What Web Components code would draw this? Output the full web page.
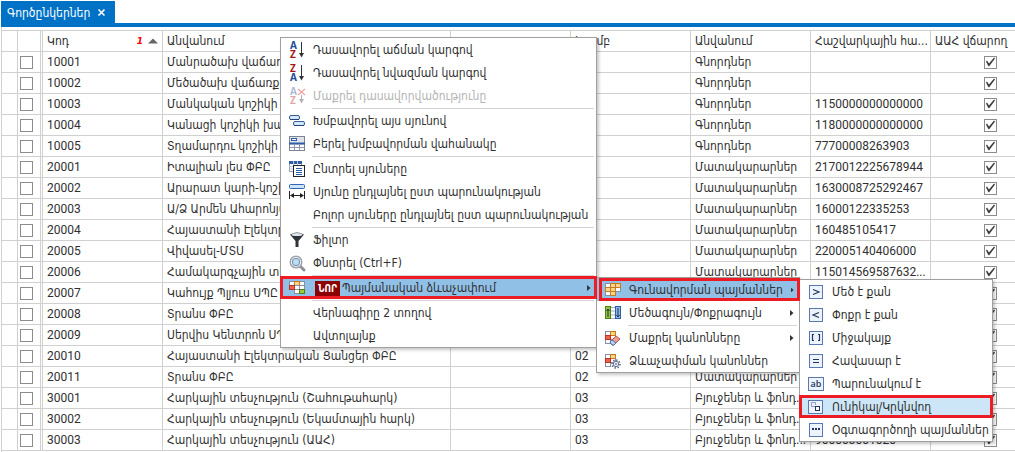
<!DOCTYPE html>
<html lang="hy">
<head>
<meta charset="utf-8">
<title>Գործընկերներ</title>
<style>
  html, body { margin: 0; min-height: 100vh; }
  body {
    background: #fff; color: #303030; overflow: hidden;
    font: 12px/16px "DejaVu Sans Condensed", "DejaVu Sans", sans-serif;
  }
</style>
</head>
<body>
<app-window>
  <tab-strip slot="tabs">Գործընկերներ</tab-strip>
  <data-grid></data-grid>
  <context-menu slot="menu" class="root" style="--menu-width:317px">
    <menu-item icon="az">Դասավորել աճման կարգով</menu-item>
    <menu-item icon="za">Դասավորել նվազման կարգով</menu-item>
    <menu-item icon="unsort" disabled>Մաքրել դասավորվածությունը</menu-item>
    <menu-separator></menu-separator>
    <menu-item icon="group">Խմբավորել այս սյունով</menu-item>
    <menu-item icon="panel">Բերել խմբավորման վահանակը</menu-item>
    <menu-separator></menu-separator>
    <menu-item icon="columns">Ընտրել սյուները</menu-item>
    <menu-item icon="width">Սյունը ընդլայնել ըստ պարունակության</menu-item>
    <menu-item>Բոլոր սյուները ընդլայնել ըստ պարունակության</menu-item>
    <menu-separator></menu-separator>
    <menu-item icon="filter">Ֆիլտր</menu-item>
    <menu-item icon="search">Փնտրել (Ctrl+F)</menu-item>
    <menu-separator></menu-separator>
    <menu-item icon="format" open marked><new-badge>ՆՈՐ</new-badge>Պայմանական ձևաչափում
      <context-menu slot="submenu" style="--menu-width:204px">
        <menu-item icon="color" open marked style="--mark-inset:0 -1px 0 2px">Գունավորման պայմաններ
          <context-menu slot="submenu" style="--menu-width:194px">
            <menu-item icon="gt">Մեծ է քան</menu-item>
            <menu-item icon="lt">Փոքր է քան</menu-item>
            <menu-item icon="between">Միջակայք</menu-item>
            <menu-item icon="eq">Հավասար է</menu-item>
            <menu-item icon="contains">Պարունակում է</menu-item>
            <menu-item icon="unique" active marked>Ունիկալ/Կրկնվող</menu-item>
            <menu-item icon="custom">Օգտագործողի պայմաններ</menu-item>
          </context-menu>
        </menu-item>
        <menu-item icon="minmax" expands>Մեծագույն/Փոքրագույն</menu-item>
        <menu-separator></menu-separator>
        <menu-item icon="erase" expands>Մաքրել կանոնները</menu-item>
        <menu-item icon="rules">Ձևաչափման կանոններ</menu-item>
      </context-menu>
    </menu-item>
    <menu-separator></menu-separator>
    <menu-item>Վերնագիրը 2 տողով</menu-item>
    <menu-item>Ավտոլայնք</menu-item>
  </context-menu>
</app-window>

<script>
const mount = (el, html) => { el.attachShadow({ mode: 'open' }).innerHTML = html; };

/* Window frame: tabs on top, document below, menus floating over it */
customElements.define('app-window', class extends HTMLElement {
  connectedCallback() {
    mount(this, `<style>
      :host { display: flex; flex-direction: column; position: relative; min-height: 100vh; }
      main { flex: 1; min-width: 0; margin-left: 1px; padding-top: 3px; border-left: 1px solid #d0d0d0; overflow: hidden; }
      ::slotted([slot=menu]) { position: absolute; left: 280px; top: 37px; z-index: 1; }
    </style><slot name="tabs"></slot><main><slot></slot></main><slot name="menu"></slot>`);
  }
});

customElements.define('tab-strip', class extends HTMLElement {
  connectedCallback() {
    mount(this, `<style>
      :host { display: flex; margin: 1px 0 0 1px; border-bottom: 4px solid #0072c6; }
      .tab { display: flex; align-items: center; gap: 7px; height: 22px; padding: 2px 8px 0 6px; box-sizing: border-box; background: #0072c6; color: #fff; }
      button { all: unset; display: block; width: 10px; height: 10px; }
      svg { display: block; }
    </style><div class="tab"><span><slot></slot></span><button aria-label="Փակել"><svg width="10" height="10" viewBox="0 0 10 10"><path d="M1.500 1.500l6 6M7.500 1.500l-6 6" stroke="#fff" stroke-width="1.600"/></svg></button></div>`);
  }
});

const PARTNERS = [
  ['10001', 'Մանրածախ վաճառքի', '01', 'Գնորդներ', ''],
  ['10002', 'Մեծածախ վաճառքի', '01', 'Գնորդներ', ''],
  ['10003', 'Մանկական կոշիկի', '01', 'Գնորդներ', '1150000000000000'],
  ['10004', 'Կանացի կոշիկի խանութ', '01', 'Գնորդներ', '1180000000000000'],
  ['10005', 'Տղամարդու կոշիկի', '01', 'Գնորդներ', '77700008263903'],
  ['20001', 'Իտալիան լես ՓԲԸ', '02', 'Մատակարարներ', '2170012225678944'],
  ['20002', 'Արարատ կարի-կոշիկ', '02', 'Մատակարարներ', '1630008725292467'],
  ['20003', 'Ա/Ձ Արմեն Ահարոնյան', '02', 'Մատակարարներ', '16000122335253'],
  ['20004', 'Հայաստանի Էլեկտրական', '02', 'Մատակարարներ', '160485105417'],
  ['20005', 'Վիվասել-ՄՏՍ', '02', 'Մատակարարներ', '220005140406000'],
  ['20006', 'Համակարգչային տեխնիկա', '02', 'Մատակարարներ', '115014569587632...'],
  ['20007', 'Կահույք Պլյուս ՍՊԸ', '02', 'Մատակարարներ', ''],
  ['20008', 'Տրանս ՓԲԸ', '02', 'Մատակարարներ', ''],
  ['20009', 'Սերվիս Կենտրոն ՍՊԸ', '02', 'Մատակարարներ', ''],
  ['20010', 'Հայաստանի Էլեկտրական Ցանցեր ՓԲԸ', '02', 'Մատակարարներ', ''],
  ['20011', 'Տրանս ՓԲԸ', '02', 'Մատակարարներ', ''],
  ['30001', 'Հարկային տեսչություն (Շահութահարկ)', '03', 'Բյուջեներ և ֆոնդ...', ''],
  ['30002', 'Հարկային տեսչություն (Եկամտային հարկ)', '03', 'Բյուջեներ և ֆոնդ...', ''],
  ['30003', 'Հարկային տեսչություն (ԱԱՀ)', '03', 'Բյուջեներ և ֆոնդ...', '900003001020'],
];

customElements.define('data-grid', class extends HTMLElement {
  connectedCallback() {
    const rows = PARTNERS.map(([code, name, group, kind, account]) => `<tr>
      <td></td><td class="pick"><input type="checkbox" aria-label="Ընտրել ${code}"></td>
      <td class="num">${code}</td><td>${name}</td><td></td><td class="num">${group}</td>
      <td>${kind}</td><td class="num">${account}</td>
      <td><input type="checkbox" checked aria-label="ԱԱՀ վճարող ${code}"></td></tr>`).join('');
    mount(this, `<style>
      :host { display: block; }
      table { width: 100%; min-width: 1049px; table-layout: fixed; border-spacing: 0; border-top: 1px solid #d0d0d0; }
      .mark { width: 16px; } .sel { width: 25px; } .std { width: 120px; } .name { width: 288px; }
      th, td { box-sizing: border-box; height: 21px; padding: 0 4px; border: solid #d0d0d0; border-width: 0 1px 1px 0;
        font-weight: 400; text-align: left; white-space: nowrap; overflow: hidden; }
      th:nth-child(2), td:nth-child(2) { border-right: 3px double #d0d0d0; padding: 0 2px; }
      .num { font-family: Roboto, sans-serif; }
      .sorted { display: flex; align-items: center; gap: 5px; }
      .sorted b { margin-left: auto; color: #f00; font: italic bold 9px/16px "DejaVu Sans", sans-serif; }
      svg { display: block; }
      input { appearance: none; display: block; box-sizing: border-box; width: 13px; height: 13px; margin: 0 auto; border: 1px solid #8c8c8c; background: #fff; }
      .pick input { margin: 0; }
      input:checked::before { content: ""; display: block; width: 11px; height: 11px; background: #3c3c3c;
        clip-path: polygon(1px 5px, 2px 4px, 4px 7px, 9px 1px, 10px 2px, 4px 10px, 3px 9px); }
    </style>
    <table>
      <colgroup><col class="mark"><col class="sel"><col class="std"><col class="name"><col class="std"><col class="std"><col class="std"><col class="std"><col class="std"></colgroup>
      <thead><tr><th></th><th></th>
        <th><span class="sorted">Կոդ<b>1</b><svg width="10" height="6" viewBox="0 0 10 6"><path d="M0 5.500L5 0.500l5 5z" fill="#666"/></svg></span></th>
        <th>Անվանում</th><th></th><th>Խումբ</th><th>Անվանում</th><th>Հաշվարկային հա...</th><th>ԱԱՀ վճարող</th></tr></thead>
      <tbody>${rows}</tbody>
    </table>`);
  }
});

const BLUE = '#1b4d96', RED = '#a8161c';
const letters = (top, bottom) => `<g font-family="Open Sans, sans-serif" font-weight="700" font-size="10">
  <text x="1" y="7" fill="${top === 'A' ? BLUE : RED}">${top}</text>
  <text x="1" y="16" fill="${bottom === 'A' ? BLUE : RED}">${bottom}</text></g>`;
const down = (from) => `<path d="M12.500 ${from}v12" stroke="#333" fill="none"/><path d="M10 11h5l-2.500 4.500z" fill="#333"/>`;
const cell = (x, y, fill, stroke) => `<rect x="${x + .5}" y="${y + .5}" width="5" height="4" fill="${fill}" stroke="${stroke}"/>`;
const W = ['#fff', '#8890a8'], O = ['#fbd58a', '#c77a1e'], R = ['#f0604c', '#b93426'], G = ['#9ccb3b', '#557f1a'];
const cells = (list) => list.map(([c, r, k]) => cell(c * 5, 1 + r * 4, k[0], k[1])).join('');
const op = (body) => `<rect x="1.500" y="1.500" width="13" height="13" fill="#edf3fc" stroke="#5877b5"/><g stroke="#22345f" fill="none" stroke-width="1.200">${body}</g>`;
const ICONS = {
  az: letters('A', 'Z') + down(0),
  za: letters('Z', 'A') + down(0),
  unsort: `<g opacity=".38">${letters('A', 'Z')}<path d="M12.500 7v6" stroke="#333"/><path d="M10 11h5l-2.500 4.500z" fill="#333"/><path d="M9 1l7 6M16 1l-7 6" stroke="#d11" stroke-width="1.400"/></g>`,
  group: `<rect x=".5" y="2.500" width="10" height="4" rx="1.500" fill="#d3e8fa" stroke="#3a5d96"/><rect x="4.500" y="8.500" width="11" height="4" rx="1.500" fill="#d3e8fa" stroke="#3a5d96"/><path d="M1 6.500h9M5 12.500h10" stroke="#24457c"/>`,
  panel: `<rect x=".5" y=".5" width="15" height="14" fill="#dfe2e8" stroke="#7d8494"/><rect x="2.500" y="2.500" width="5" height="2" fill="#fff" stroke="#2c5fa8"/><path d="M0 7.500h16" stroke="#2c5fa8" stroke-width="2"/><path d="M1 9h14v5H1z" fill="#fff"/><path d="M1 11.500h14M5.500 8v6M10.500 8v6" stroke="#8f98ab"/>`,
  columns: `<path d="M.5.5h12v10H.5z" fill="#fff" stroke="#8d99b5"/><path d="M0 1.500h13" stroke="#2c5fa8" stroke-width="3"/><path d="M4.500 0v10M8.500 0v4M0 5.500h5M0 8h5" stroke="#b9c3d8"/><rect x="4.500" y="4.500" width="11" height="11" fill="#fff" stroke="#1f2530"/><path d="M7 7.500h6M7 9.500h6M7 11.500h6M7 13.500h6" stroke="#2c5fa8"/>`,
  width: `<rect x=".5" y=".5" width="15" height="4" rx="1" fill="#cde4fa" stroke="#2f66b5"/><path d="M.5 7v8M15.500 7v8M2 11.500h12" stroke="#222"/><path d="M1 11.500l4-2.500v5zM15 11.500l-4-2.500v5z" fill="#222"/>`,
  filter: `<path d="M1 2.500Q8 -1.500 15 2.500L9.500 9v6h-3V9z" fill="#2f3338"/><ellipse cx="8" cy="2.500" rx="5.500" ry="1.500" fill="#dfe5ee"/>`,
  search: `<path d="M11 11l4 4" stroke="#8b8f96" stroke-width="3" stroke-linecap="round"/><circle cx="7" cy="7" r="5.800" fill="#f4f6f8" stroke="#a0a5ad" stroke-width="1.500"/><circle cx="7" cy="7" r="3.700" fill="#b9ddf5" stroke="#6f8aa3"/>`,
  format: cells([[0,0,W],[2,0,W],[1,0,O],[2,1,W],[1,1,W],[1,2,W],[0,1,R],[2,2,G]]),
  color: cells([[0,0,W],[2,1,W],[0,2,W],[1,0,O],[2,0,O],[0,1,O],[1,1,O],[1,2,O]]),
  minmax: `<rect x="5.500" y="2.500" width="5" height="11" fill="#fff" stroke="#a9b0bd"/><path d="M6 6h5M6 10h5" stroke="#a9b0bd"/><rect x=".5" y="1.500" width="5" height="12" fill="#8fc43c" stroke="#4e7f16"/><rect x="10.500" y="1.500" width="5" height="12" fill="#8db9ea" stroke="#2c5fa8"/><path d="M3 12V4M1.500 6L3 4l1.500 2M13 3v8M11.500 10l1.500 2 1.500-2" stroke="#20304a" fill="none"/>`,
  erase: cells([[0,0,W],[1,1,W],[0,2,W],[1,0,O],[0,1,R]]) + `<path d="M5 12l6-6 4 3-6 6H7z" fill="#f19a8e" stroke="#b4584c"/><path d="M5 12l2-2 4 3-2 2H7z" fill="#b9d3f3" stroke="#4d76b3"/>`,
  rules: cells([[0,0,W],[1,1,W],[0,2,W],[1,0,O],[0,1,R]]) + `<circle cx="11" cy="11" r="3.900" fill="none" stroke="#687591" stroke-width="1.800" stroke-dasharray="1.500 1.500"/><circle cx="11" cy="11" r="2.700" fill="#eef1f7" stroke="#687591"/><circle cx="11" cy="11" r=".9" fill="#687591"/>`,
  gt: op('<path d="M5 5.500l6 2.500L5 10.500"/>'),
  lt: op('<path d="M11 5.500L5 8l6 2.500"/>'),
  between: op('<path d="M6 4.500H4.500v6H6M10 4.500h1.500v6H10"/>'),
  eq: op('<path d="M5 6.500h6M5 9.500h6"/>'),
  contains: `<rect x=".5" y="1.500" width="15" height="13" fill="#edf3fc" stroke="#5877b5"/><text x="8" y="11" text-anchor="middle" font-family="Open Sans, sans-serif" font-weight="600" font-size="9" fill="#22345f">ab</text>`,
  unique: `<rect x=".5" y="1.500" width="14" height="13" fill="#edf3fc" stroke="#5877b5"/><path d="M7 7.500H3.500v-4h4V6" stroke="#8a9cc4" fill="none"/><rect x="7.500" y="7.500" width="4" height="4" fill="#fff" stroke="#22345f"/>`,
  custom: op('<path d="M4 7h2M7 7h2M10 7h2" stroke-width="2"/>'),
};

customElements.define('menu-icon', class extends HTMLElement {
  connectedCallback() {
    mount(this, `<style>:host { display: block; flex: none; width: 16px; height: 16px; } svg { display: block; overflow: visible; }</style>
      <svg width="16" height="16" viewBox="0 0 16 16" aria-hidden="true">${ICONS[this.getAttribute('name')] || ''}</svg>`);
  }
});

customElements.define('new-badge', class extends HTMLElement {
  connectedCallback() {
    mount(this, `<style>:host { display: inline-block; margin: 0 2px; padding: 0 3px; background: #8b0000; color: #fff; font-size: 10px; line-height: 15px; font-weight: 700; }</style><slot></slot>`);
  }
});

customElements.define('context-menu', class extends HTMLElement {
  connectedCallback() {
    this.setAttribute('role', 'menu');
    mount(this, `<style>
      :host { display: block; box-sizing: border-box; width: var(--menu-width); background: #fff; border: 1px solid #a0a0a0;
        box-shadow: 2px 2px 3px rgba(0,0,0,.22); }
    </style><slot></slot>`);
  }
});

customElements.define('menu-separator', class extends HTMLElement {
  connectedCallback() {
    mount(this, `<style>:host { display: block; height: 1px; margin: 0 2px 0 31px; padding-top: 1px; } hr { margin: 0; border: 0; height: 1px; background: #d4d4d4; }</style><hr>`);
  }
});

customElements.define('menu-item', class extends HTMLElement {
  connectedCallback() {
    const open = this.hasAttribute('open') || this.hasAttribute('expands');
    mount(this, `<style>
      :host { display: block; position: relative; }
      button { all: unset; box-sizing: border-box; display: flex; gap: 8px; width: 100%; height: 23px; padding: 4px 5px 3px 8px; white-space: nowrap; }
      .label { flex: 1; }
      .arrow { display: block; align-self: center; }
      :host([disabled]) button { color: #b4b4b4; }
      :host([open]) button { background: #91c0e7; }
      :host([active]) button { background: #cde6f7; }
      :host([marked])::after { content: ""; position: absolute; inset: var(--mark-inset, 0 -1px); height: 17px; border: 3px solid #ed1c24; z-index: 3; pointer-events: none; }
      ::slotted([slot=submenu]) { position: absolute; left: 100%; top: 1px; z-index: 2; --mark-inset: 0 -1px; }
    </style>
    <button role="menuitem" ${this.hasAttribute('disabled') ? 'disabled' : ''} ${open ? 'aria-haspopup="menu"' : ''}>
      <menu-icon name="${this.getAttribute('icon') || ''}"></menu-icon>
      <span class="label"><slot></slot></span>
      ${open ? '<svg class="arrow" width="4" height="6" viewBox="0 0 4 6"><path d="M0 0l3.500 3L0 6z" fill="#333"/></svg>' : ''}
    </button><slot name="submenu"></slot>`);
  }
});
</script>
</body>
</html>
